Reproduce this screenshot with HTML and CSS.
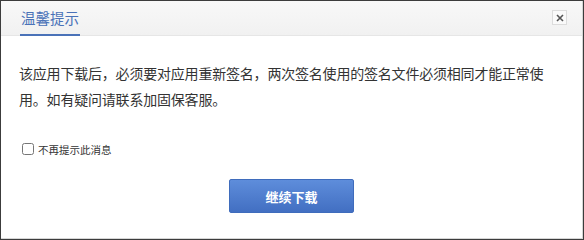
FILE: index.html
```html
<!DOCTYPE html>
<html lang="zh-CN">
<head>
    <meta charset="UTF-8">
    <title>温馨提示</title>
    <link rel="stylesheet" href="styles.css">
</head>
<body>
    <div class="dialog">
        <div class="dialog-inner">
            <div class="dialog-header">
                <span class="dialog-title">温馨提示</span>
                <button class="close-btn" title="关闭">
                    <svg width="8" height="8" viewBox="0 0 8 8">
                        <path d="M1 1L7 7M7 1L1 7" stroke="#555" stroke-width="1.6" fill="none"/>
                    </svg>
                </button>
            </div>
            <div class="dialog-body">
                <p class="message">该应用下载后，必须要对应用重新签名，两次签名使用的签名文件必须相同才能正常使用。如有疑问请联系加固保客服。</p>
                <label class="no-remind">
                    <input type="checkbox" class="check">
                    <span>不再提示此消息</span>
                </label>
                <div class="actions">
                    <button class="btn-primary">继续下载</button>
                </div>
            </div>
        </div>
    </div>
</body>
</html>
```

FILE: styles.css
```css
body {
    margin: 0;
    padding: 0;
    font-family: "Noto Sans CJK SC", "Noto Sans", sans-serif;
    color: #333;
    background: #fff;
}

.dialog {
    width: 584px;
    height: 240px;
    box-sizing: border-box;
    border: 1px solid #3c3c3c;
}

.dialog-inner {
    height: 100%;
    box-sizing: border-box;
    border-right: 1px solid #d6d6d6;
    border-bottom: 1px solid #d6d6d6;
    background: #fff;
}

.dialog-header {
    height: 34px;
    display: flex;
    align-items: stretch;
    justify-content: space-between;
    padding: 0 15px 0 19px;
    background: linear-gradient(to bottom, #f8f8f8, #f1f1f1);
    border-bottom: 1px solid #e6e6e6;
}

.dialog-title {
    display: flex;
    align-items: center;
    padding: 0 1px;
    font-size: 14.5px;
    color: #4a72b8;
    border-bottom: 2px solid #4a72b8;
    margin-bottom: -1px;
}

.close-btn {
    align-self: flex-start;
    margin-top: 9px;
    width: 15px;
    height: 15px;
    padding: 0;
    display: flex;
    align-items: center;
    justify-content: center;
    border: 1px solid #dcdcdc;
    background: #fafafa;
    cursor: pointer;
}

.dialog-body {
    padding-top: 24px;
}

.message {
    margin: 0;
    padding: 0 25px 0 18px;
    font-size: 14px;
    letter-spacing: -0.2px;
    line-height: 26px;
    color: #333;
}

.no-remind {
    display: flex;
    align-items: center;
    gap: 4px;
    margin-top: 29px;
    margin-left: 21px;
    height: 16px;
    font-size: 10.5px;
    color: #333;
}

.check {
    margin: 0;
    width: 12px;
    height: 12px;
}

.actions {
    display: flex;
    justify-content: center;
    margin-top: 22px;
}

.btn-primary {
    width: 125px;
    height: 34px;
    border: 1px solid #3f6cbc;
    border-radius: 2px;
    background: linear-gradient(to bottom, #5e8ddb, #426fc2);
    color: #fff;
    font-family: inherit;
    font-size: 13px;
    font-weight: bold;
    cursor: pointer;
}
```
